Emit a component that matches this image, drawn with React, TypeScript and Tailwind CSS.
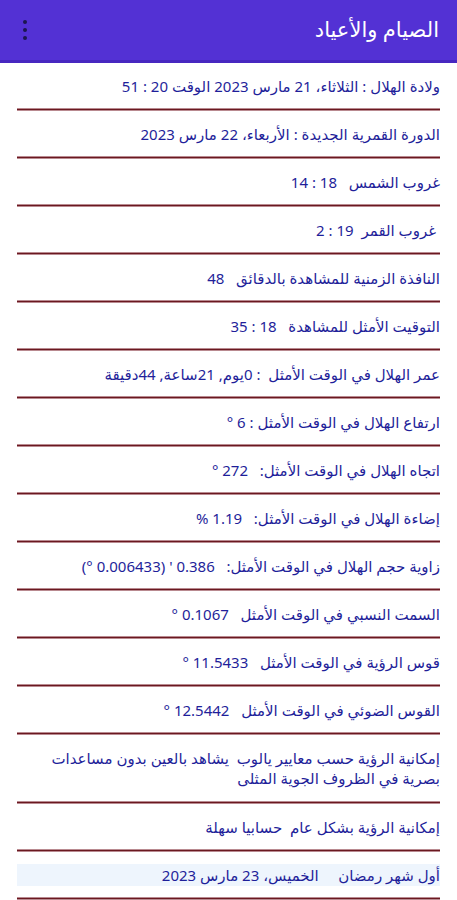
import React from "react";

const rows: { text: string; tall?: boolean; highlight?: boolean }[] = [
  { text: "ولادة الهلال : الثلاثاء، 21 مارس 2023 الوقت 20 : 51" },
  { text: "الدورة القمرية الجديدة : الأربعاء، 22 مارس 2023" },
  { text: "غروب الشمس   18 : 14" },
  { text: "\u00a0غروب القمر  19 : 2" },
  { text: "النافذة الزمنية للمشاهدة بالدقائق   48" },
  { text: "التوقيت الأمثل للمشاهدة   18 : 35" },
  { text: "عمر الهلال في الوقت الأمثل  : 0يوم, 21ساعة, 44دقيقة" },
  { text: "ارتفاع الهلال في الوقت الأمثل : 6 °" },
  { text: "اتجاه الهلال في الوقت الأمثل:   272 °" },
  { text: "إضاءة الهلال في الوقت الأمثل:   1.19 %" },
  { text: "زاوية حجم الهلال في الوقت الأمثل:   0.386 ' (0.006433 °)" },
  { text: "السمت النسبي في الوقت الأمثل   0.1067 °" },
  { text: "قوس الرؤية في الوقت الأمثل   11.5433 °" },
  { text: "القوس الضوئي في الوقت الأمثل   12.5442 °" },
  {
    text: "إمكانية الرؤية حسب معايير يالوب  يشاهد بالعين بدون مساعدات بصرية في الظروف الجوية المثلى",
    tall: true,
  },
  { text: "إمكانية الرؤية بشكل عام  حسابيا سهلة" },
  { text: "أول شهر رمضان     الخميس، 23 مارس 2023", highlight: true },
];

function Divider() {
  return (
    <div className="flex flex-col">
      <div className="h-px bg-[#b98a90]" />
      <div className="h-px bg-[#6a1820]" />
      <div className="h-px bg-[#b98a90]" />
    </div>
  );
}

export default function App() {
  return (
    <div
      className="w-[457px] min-h-[900px] bg-white"
      style={{ fontFamily: '"Noto Sans", "DejaVu Sans", sans-serif' }}
    >
      <div className="h-[63px] bg-[#5331d4] border-b-[3px] border-[#4727c0] flex items-center justify-between px-[18px]">
        <div className="flex flex-col gap-[4px] pl-[5px]">
          <span className="w-[4px] h-[4px] rounded-full bg-[#1c1650]" />
          <span className="w-[4px] h-[4px] rounded-full bg-[#1c1650]" />
          <span className="w-[4px] h-[4px] rounded-full bg-[#1c1650]" />
        </div>
        <div dir="rtl" className="text-white text-[21px] font-medium">
          الصيام والأعياد
        </div>
      </div>
      <div className="px-[17px]">
        {rows.map((r, i) => (
          <div key={i}>
            <div
              className={
                r.tall
                  ? "h-[66px] flex items-center"
                  : "h-[45px] flex items-center"
              }
            >
              <div
                dir="rtl"
                className={
                  r.highlight
                    ? "w-full bg-[#eef5fd] h-[22px] flex items-center text-[15px] leading-[20px] text-[#1f1f9a] whitespace-pre-wrap"
                    : "w-full text-[15px] leading-[20px] text-[#1f1f9a] whitespace-pre-wrap"
                }
              >
                {r.text}
              </div>
            </div>
            <Divider />
          </div>
        ))}
      </div>
    </div>
  );
}
